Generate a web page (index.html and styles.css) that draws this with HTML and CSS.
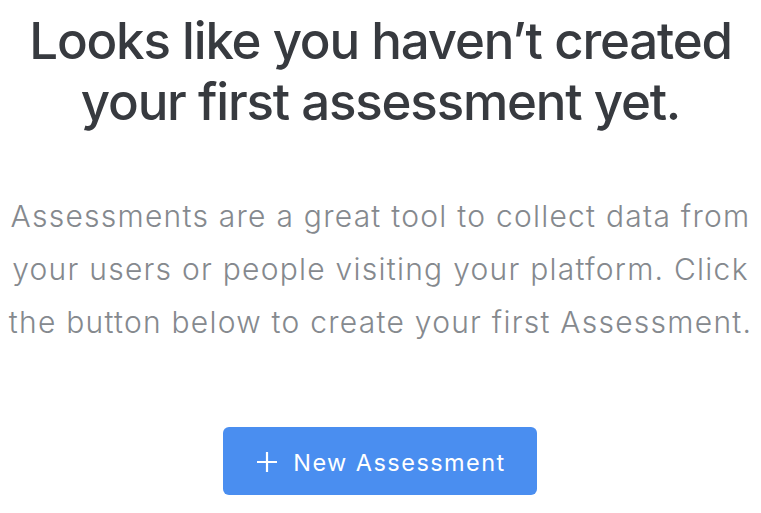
FILE: index.html
```html
<!DOCTYPE html>
<html lang="en">
<head>
<meta charset="utf-8">
<title>Assessments</title>
<link rel="stylesheet" href="styles.css">
</head>
<body>
<main class="empty">
  <h1 class="empty-title">Looks like you haven’t created<br>your first assessment yet.</h1>
  <p class="empty-text">Assessments are a great tool to collect data from<br>your users or people visiting your platform. Click<br>the button below to create your first Assessment.</p>
  <button class="btn-primary" type="button">
    <svg class="btn-icon" viewBox="0 0 20 20" aria-hidden="true"><path d="M10 0v20M0 10h20"/></svg>
    <span>New Assessment</span>
  </button>
</main>
</body>
</html>
```
FILE: styles.css
```css
html, body {
  margin: 0;
  padding: 0;
  background: #ffffff;
}
.empty {
  width: 761px;
  display: flex;
  flex-direction: column;
  align-items: center;
  text-align: center;
  padding-top: 10px;
  font-family: Inter, "Liberation Sans", sans-serif;
}
.empty-title {
  margin: 0;
  font-size: 51px;
  line-height: 61px;
  font-weight: 500;
  letter-spacing: -1.2px;
  color: #373a3f;
  white-space: nowrap;
}
.empty-text {
  margin: 58px 0 0;
  font-size: 30px;
  line-height: 53px;
  font-weight: 300;
  letter-spacing: 1.25px;
  color: #85898e;
  white-space: nowrap;
}
.btn-primary {
  margin-top: 78px;
  width: 314px;
  height: 68px;
  border: 0;
  border-radius: 6px;
  background: #4a8ef0;
  color: #ffffff;
  display: flex;
  align-items: center;
  justify-content: center;
  gap: 16px;
  font-family: Inter, "Liberation Sans", sans-serif;
  font-size: 23.5px;
  font-weight: 400;
  letter-spacing: 1.45px;
  padding: 2px 0 0 4px;
  position: relative;
  left: -1px;
}
.btn-icon {
  width: 20px;
  height: 20px;
  fill: none;
  stroke: #ffffff;
  stroke-width: 2.2;
}
```
